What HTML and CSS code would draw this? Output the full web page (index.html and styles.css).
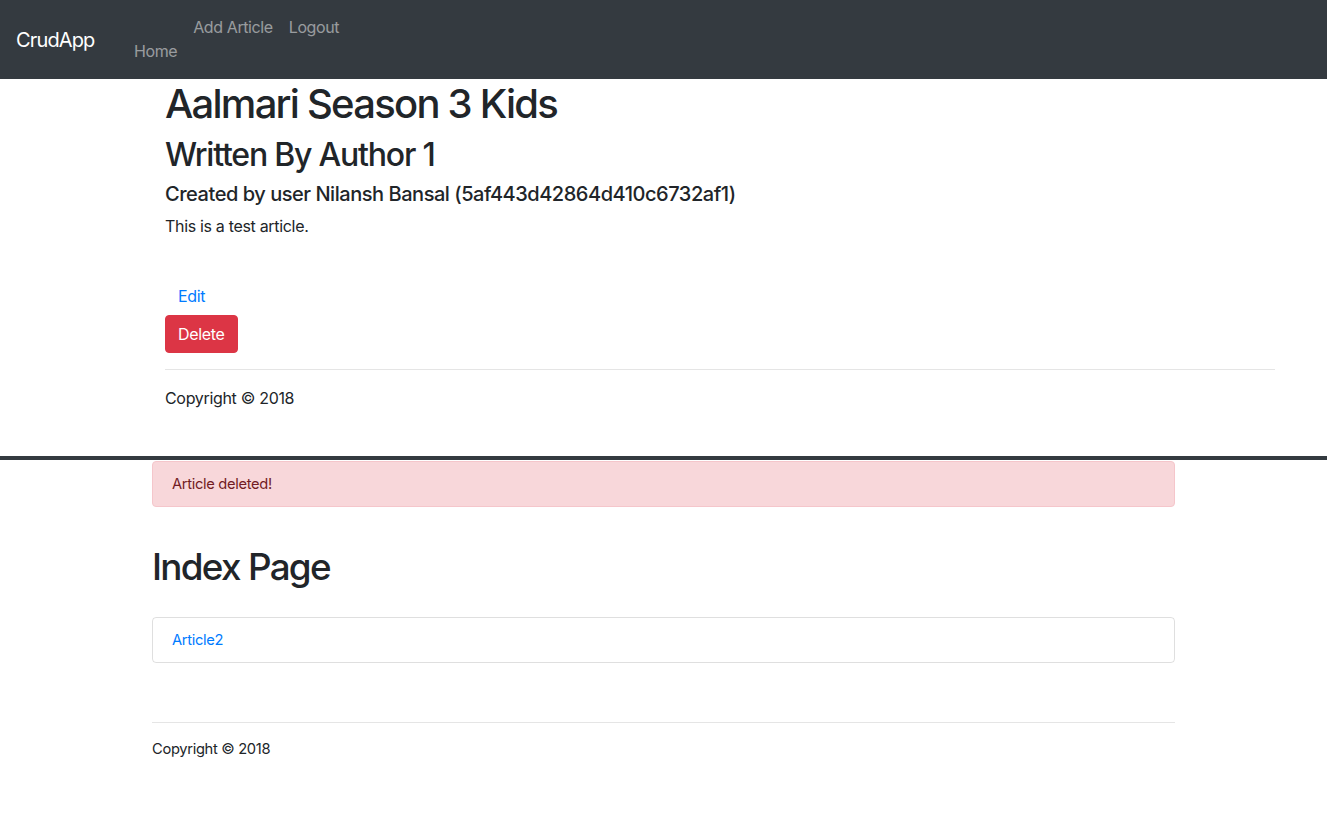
FILE: index.html
```html
<!DOCTYPE html>
<html>
<head>
<meta charset="utf-8">
<link rel="stylesheet" href="styles.css">
</head>
<body>
<section class="page-top">
  <nav class="navbar">
    <a class="brand" href="#">CrudApp</a>
    <ul class="nav">
      <li class="nav-home"><a href="#">Home</a></li>
      <li class="nav-add"><a href="#">Add Article</a></li>
      <li class="nav-logout"><a href="#">Logout</a></li>
    </ul>
  </nav>
  <main class="container-top">
    <h1 class="title">Aalmari Season 3 Kids</h1>
    <h2 class="author">Written By Author 1</h2>
    <h5 class="creator">Created by user Nilansh Bansal (5af443d42864d410c6732af1)</h5>
    <p class="body-text">This is a test article.</p>
    <div class="spacer"></div>
    <a class="btn btn-link" href="#">Edit</a>
    <button class="btn btn-danger">Delete</button>
    <hr class="rule">
    <footer class="footer-top">Copyright &copy; 2018</footer>
  </main>
</section>
<div class="navbar-edge"></div>
<section class="page-bottom">
  <div class="container-bottom">
    <div class="alert">Article deleted!</div>
    <h1 class="index-title">Index Page</h1>
    <ul class="list-group">
      <li class="list-item"><a href="#">Article2</a></li>
    </ul>
    <hr class="rule rule-bottom">
    <footer class="footer-bottom">Copyright &copy; 2018</footer>
  </div>
</section>
</body>
</html>
```

FILE: styles.css
```css
* { box-sizing: border-box; }
html, body {
  margin: 0;
  padding: 0;
  background: #fff;
  color: #212529;
  font-family: Inter, "Helvetica Neue", Arial, sans-serif;
  font-size: 16px;
  line-height: 1.5;
  letter-spacing: -0.02em;
}
a { text-decoration: none; }

.page-top { height: 456px; overflow: hidden; }

.navbar {
  height: 79px;
  background: #343a40;
  display: flex;
  align-items: center;
  padding: 0 16px;
}
.brand {
  color: #fff;
  font-size: 20px;
  line-height: 30px;
  width: 110px;
  letter-spacing: -0.043em;
}
.nav {
  list-style: none;
  margin: -1px 0 0;
  padding: 0;
  display: grid;
  grid-template-columns: auto auto auto;
  grid-template-rows: 24px 24px;
}
.nav a {
  display: block;
  color: rgba(255,255,255,.5);
  padding: 0 8px;
  line-height: 24px;
  letter-spacing: -0.025em;
}
.nav-home { grid-column: 1; grid-row: 2; }
.nav-add { grid-column: 2; grid-row: 1; }
.nav-logout { grid-column: 3; grid-row: 1; }

.container-top {
  margin-left: 165px;
  width: 1110px;
  padding-top: 1px;
}
.title {
  font-size: 40px;
  font-weight: 500;
  line-height: 1.2;
  margin: 0 0 8px;
  letter-spacing: -0.044em;
}
.author {
  font-size: 32px;
  font-weight: 500;
  line-height: 1.2;
  margin: 0 0 8px;
  letter-spacing: -0.038em;
}
.creator {
  font-size: 20px;
  font-weight: 500;
  line-height: 1.2;
  margin: 0 0 8px;
  letter-spacing: -0.023em;
}
.body-text { margin: 0 0 16px; }
.spacer { height: 23px; }
.btn {
  display: inline-block;
  font-family: inherit;
  font-size: 16px;
  line-height: 24px;
  padding: 6px 12px;
  border: 1px solid transparent;
  border-radius: 4px;
  letter-spacing: -0.02em;
}
.btn-link {
  display: block;
  width: max-content;
  color: #007bff;
  background: transparent;
}
.btn-danger {
  display: block;
  color: #fff;
  background: #dc3545;
  border-color: #dc3545;
}
.rule {
  margin: 16px 0;
  border: 0;
  border-top: 1px solid rgba(0,0,0,.1);
  height: 0;
}
.footer-top { line-height: 24px; }

.navbar-edge {
  height: 4px;
  background: #343a40;
  margin-bottom: 1px;
}

.page-bottom { font-size: 14.7px; }
.container-bottom {
  margin-left: 152px;
  width: 1023px;
}
.alert {
  height: 46px;
  padding: 0 19px;
  line-height: 44px;
  background: #f8d7da;
  border: 1px solid #f5c6cb;
  color: #721c24;
  border-radius: 4px;
  margin-bottom: 38px;
}
.index-title {
  font-size: 36.8px;
  font-weight: 500;
  line-height: 44px;
  margin: 0 0 28px;
  letter-spacing: -0.046em;
}
.list-group {
  list-style: none;
  margin: 0;
  padding: 0;
}
.list-item {
  height: 46px;
  padding: 0 19px;
  line-height: 44px;
  border: 1px solid rgba(0,0,0,.125);
  border-radius: 4px;
}
.list-item a { color: #007bff; }
.rule-bottom { margin: 59px 0 14px; }
.footer-bottom { line-height: 24px; }
```
